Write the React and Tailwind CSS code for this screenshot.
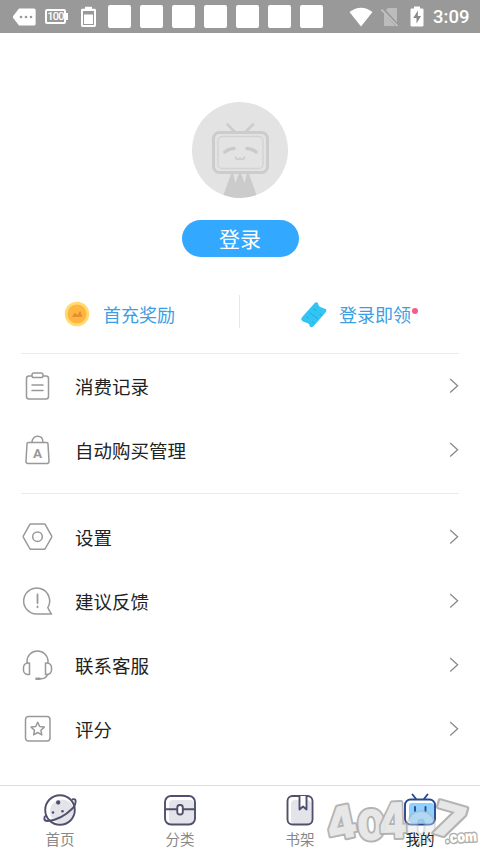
import React from 'react';

// Status bar icons
function StatusBar() {
  return (
    <header className="h-[33px] bg-[#999999] flex items-center text-white">
      <svg className="ml-3 shrink-0" width="24" height="18" viewBox="0 0 24 18">
        <path d="M7 0.5H22a1.6 1.6 0 0 1 1.6 1.6V15.9a1.6 1.6 0 0 1-1.6 1.6H7L1 9.8V8.2z" fill="#fff" />
        <circle cx="9" cy="9" r="1.3" fill="#999" />
        <circle cx="14" cy="9" r="1.3" fill="#999" />
        <circle cx="19" cy="9" r="1.3" fill="#999" />
      </svg>
      <div className="ml-[9px] w-[21px] h-[15px] border-2 border-white rounded-[2px] flex items-center justify-center">
        <span className="text-[11px] leading-none font-medium tracking-[-0.8px]">100</span>
      </div>
      <div className="w-[2px] h-[7px] bg-white"></div>
      <svg className="ml-[12px] shrink-0" width="17" height="22" viewBox="0 0 17 22">
        <path d="M5 0.8h7v2h2.6a1.4 1.4 0 0 1 1.4 1.4v15.4a1.4 1.4 0 0 1-1.4 1.4H2.4A1.4 1.4 0 0 1 1 19.6V4.2a1.4 1.4 0 0 1 1.4-1.4H5z" fill="#fff" />
        <rect x="3" y="5" width="11" height="14" fill="#999" />
        <rect x="4" y="8.5" width="9" height="9.5" fill="#fff" />
      </svg>
      <div className="ml-[11px] flex gap-[9px]">
        {[0, 1, 2, 3, 4, 5, 6].map((i) => (
          <div key={i} className="w-[23px] h-[23px] bg-white rounded-[2px]"></div>
        ))}
      </div>
      <svg className="ml-[26px] shrink-0" width="24" height="20" viewBox="0 0 24 20">
        <path d="M0.5 5Q12-3.5 23.5 5L12 19.5z" fill="#fff" />
      </svg>
      <svg className="ml-[8px] shrink-0" width="18" height="20" viewBox="0 0 18 20">
        <path d="M7 1h8a1 1 0 0 1 1 1v17H3V5z" fill="#bcbcbc" />
        <path d="M1 1.5L17 19" stroke="#999" strokeWidth="3.4" />
        <path d="M0.5 2.5L16.5 19" stroke="#c4c4c4" strokeWidth="1.6" />
      </svg>
      <svg className="ml-[11px] shrink-0" width="14" height="21" viewBox="0 0 14 21">
        <path d="M4 0.5h6v2h2.2a1.3 1.3 0 0 1 1.3 1.3v15.4a1.3 1.3 0 0 1-1.3 1.3H1.8a1.3 1.3 0 0 1-1.3-1.3V3.8a1.3 1.3 0 0 1 1.3-1.3H4z" fill="#fff" />
        <path d="M8 4.5L3.2 12h3.3v5.5L11 10H7.8z" fill="#8a8a8a" />
      </svg>
      <span className="ml-[9px] pt-[2px] text-[18.5px] leading-none font-medium">3:09</span>
    </header>
  );
}

function Avatar() {
  return (
    <svg width="96" height="96" viewBox="0 0 96 96">
      <defs>
        <clipPath id="avatar">
          <circle cx="48" cy="48" r="48" />
        </clipPath>
      </defs>
      <circle cx="48" cy="48" r="48" fill="#e3e3e3" />
      <g clipPath="url(#avatar)">
        <path d="M29 100l10-28h18l10 28z" fill="#cbcbcb" />
        <path d="M41 71l2.5 10L47 71zM49 71l3.5 10L55 71z" fill="#e3e3e3" />
      </g>
      <path d="M35.5 22.5l7 7M61 22.5l-7 7" stroke="#cdcdcd" strokeWidth="2.8" strokeLinecap="round" />
      <rect x="21.5" y="30.5" width="54" height="40" rx="6" fill="#e3e3e3" stroke="#cccccc" strokeWidth="3" />
      <rect x="26" y="34.5" width="45" height="32" rx="4" fill="none" stroke="#d3d3d3" strokeWidth="1.3" />
      <path d="M33 50q3-3 9-3.5M64 50q-3-3-9-3.5" fill="none" stroke="#cacaca" strokeWidth="3.5" strokeLinecap="round" />
      <path d="M43.5 55c0 3 4.5 3 4.5 0.5c0 2.5 4.5 2.5 4.5-0.5" fill="none" stroke="#cacaca" strokeWidth="1.5" strokeLinecap="round" />
    </svg>
  );
}

function CoinIcon() {
  return (
    <svg width="26" height="26" viewBox="0 0 26 26">
      <circle cx="13" cy="13" r="12.3" fill="#ffdb72" />
      <circle cx="13" cy="13" r="9.6" fill="#ffb640" />
      <path d="M8.5 15.5L11 12l2.5 2.5 2.5-4L18 15.5z" fill="#e98e35" stroke="#e98e35" strokeLinejoin="round" />
    </svg>
  );
}

function TicketIcon() {
  return (
    <svg width="28" height="28" viewBox="0 0 28 28">
      <path
        d="M14.5 2.2Q16.5 0.5 18 2.3Q18.5 5.8 21.5 6.5Q24.5 7.5 26.2 8.3Q26.8 10 25.5 11.5L13.5 25.2Q11.5 27.2 9.8 25.5Q9.5 22.3 6.5 21.8Q3 21 1.3 19Q0.8 17.5 2.2 16z"
        fill="#32c5f4"
      />
      <path d="M10 12l8 6M14 8l1.5 1.3M20 13l1.5 1.3M7 16l1 1M12.5 21l1 1" stroke="#22b0e8" strokeWidth="1.1" strokeLinecap="round" />
    </svg>
  );
}

const icons = {
  record: (
    <>
      <path d="M9.5 6H7a2.5 2.5 0 0 0-2.5 2.5v18A2.5 2.5 0 0 0 7 29h17a2.5 2.5 0 0 0 2.5-2.5v-18A2.5 2.5 0 0 0 24 6h-2.5" />
      <rect x="10" y="3" width="11" height="4.5" rx="1.8" />
      <path d="M10 15h11M10 20.5h11" />
    </>
  ),
  bag: (
    <>
      <path d="M6.5 8.5h18a1.5 1.5 0 0 1 1.5 1.5l1 17a2 2 0 0 1-2 2.5H6a2 2 0 0 1-2-2.5l1-17a1.5 1.5 0 0 1 1.5-1.5z" />
      <path d="M10 8.5C10 4.5 12.3 2.3 15.5 2.3S21 4.5 21 8.5" />
      <text x="15.5" y="24" textAnchor="middle" fontSize="13.5" fontWeight="bold" fill="#999" stroke="none">A</text>
    </>
  ),
  settings: (
    <>
      <path d="M8.9 3h13.2a1.5 1.5 0 0 1 1.2.7l6.3 11.2a1.5 1.5 0 0 1 0 1.4l-6.3 11.2a1.5 1.5 0 0 1-1.2.7H8.900a1.5 1.5 0 0 1-1.2-.7L1.4 16.3a1.5 1.5 0 0 1 0-1.4L7.7 3.7a1.5 1.5 0 0 1 1.2-.7z" />
      <circle cx="15.5" cy="15.7" r="4.8" />
    </>
  ),
  feedback: (
    <>
      <path d="M25.8 22.7A13 13 0 1 0 15 29h14.5q-.8-.6-3.7-6.3z" />
      <path d="M15.5 9.5v8.5M15.5 21.5v0.8" strokeWidth="1.8" />
    </>
  ),
  service: (
    <>
      <path d="M5 14V12.5a10.5 10.5 0 0 1 21 0V14" />
      <path d="M7.5 14v11.5H6A4.5 4.5 0 0 1 1.5 21v-2.5A4.5 4.5 0 0 1 6 14zM23.5 14v11.5H25a4.5 4.5 0 0 0 4.5-4.5v-2.5A4.5 4.5 0 0 0 25 14z" />
      <path d="M25.5 25.5q-1.5 4-6 4.2h-4" />
      <path d="M14.5 29.7h3" strokeWidth="2.6" />
    </>
  ),
  rate: (
    <>
      <rect x="3.5" y="3.5" width="24.5" height="24.5" rx="3" />
      <path d="M15.7 9.3l2 4.2 4.6.6-3.4 3.1.9 4.6-4.1-2.3-4.1 2.3.9-4.6-3.4-3.1 4.6-.6z" />
    </>
  ),
};

function MenuRow({ icon, label }) {
  return (
    <li className="h-16 flex items-center">
      <svg className="ml-px" width="32" height="32" viewBox="0 0 32 32" fill="none" stroke="#999" strokeWidth="1.5" strokeLinejoin="round" strokeLinecap="round">
        {icons[icon]}
      </svg>
      <span className="ml-[21px] pt-[5px] flex-1 text-[18.5px] leading-none text-[#222]">{label}</span>
      <svg width="10" height="16" viewBox="0 0 10 16" fill="none" stroke="#8a8a8a" strokeWidth="1.3">
        <path d="M1.2 1L8.6 7.8L1.2 14.6" />
      </svg>
    </li>
  );
}

const tabs = [
  {
    label: '首页',
    drawing: (
      <>
        <circle cx="20" cy="19.5" r="12" fill="#e2e4ea" stroke="none" />
        <circle cx="18" cy="18" r="14.8" />
        <path d="M30 7.5C35 5.5 34.5 11.5 31 16C24 23 14 28.5 5.5 29C1 29 2 24.5 4 23.5" />
        <circle cx="16.2" cy="10.5" r="1.5" fill="#50506e" strokeWidth="1.3" />
        <circle cx="11" cy="20.5" r="1.3" fill="#50506e" stroke="none" />
        <circle cx="20.5" cy="19.2" r="1.3" fill="#50506e" stroke="none" />
      </>
    ),
  },
  {
    label: '分类',
    drawing: (
      <>
        <rect x="7" y="8" width="25" height="24" rx="4" fill="#e2e4ea" stroke="none" />
        <rect x="3" y="4" width="30" height="28.5" rx="6" />
        <path d="M3 17.3h12M21 17.3h12" />
        <rect x="15.3" y="13" width="5.5" height="9.5" rx="2.5" fill="#fff" />
      </>
    ),
  },
  {
    label: '书架',
    drawing: (
      <>
        <rect x="9" y="8" width="20" height="24" rx="4" fill="#e2e4ea" stroke="none" />
        <rect x="5.5" y="4" width="25" height="28.5" rx="5" />
        <path d="M17.5 4v13.5l3.500-3 3.5 3V4" fill="#fff" />
      </>
    ),
  },
  {
    label: '我的',
    active: true,
    drawing: (
      <>
        <rect x="7" y="11" width="25" height="20" rx="3" fill="#8fd0ff" stroke="none" />
        <path d="M10.5 2.5l3.5 4.5M25.5 2.5L22 7" strokeLinecap="round" />
        <rect x="3" y="7.5" width="30" height="25" rx="5.5" />
        <path d="M13 15v4M23.5 15v4" strokeLinecap="round" />
      </>
    ),
  },
];

// cx, y: middle of the baseline, w: drawn width
const watermark = [
  { char: '4', cx: 21, y: 49, w: 30, size: 45, turn: -12 },
  { char: '0', cx: 51, y: 50, w: 28, size: 42, turn: -3 },
  { char: '4', cx: 73, y: 48, w: 28, size: 49, turn: -2 },
  { char: '0', cx: 101, y: 51, w: 28, size: 39, turn: 2, faint: true },
  { char: '7', cx: 129, y: 47, w: 31, size: 46, turn: 16 },
];

function Watermark() {
  return (
    <svg className="absolute right-0 bottom-0 overflow-visible" width="160" height="63" viewBox="0 0 160 63">
      <g fill="#e6e6e6" stroke="#b0b0b0" strokeLinejoin="round" fontFamily="Inter, Lato, sans-serif" fontWeight="900">
        {watermark.map((w, i) => (
          <text
            key={i}
            x={w.cx - w.w / 2}
            y={w.y}
            fontSize={w.size}
            strokeWidth="4"
            opacity={w.faint ? 0.4 : 0.95}
            textLength={w.w}
            lengthAdjust="spacingAndGlyphs"
            transform={`rotate(${w.turn} ${w.cx} ${w.y - 17})`}
            style={{ paintOrder: 'stroke' }}
          >
            {w.char}
          </text>
        ))}
        <text x="125" y="52" fontSize="15" strokeWidth="3" fill="#fff" textLength="32" lengthAdjust="spacingAndGlyphs" transform="rotate(-3 142 48)" style={{ paintOrder: 'stroke' }}>
          .com
        </text>
      </g>
    </svg>
  );
}

function TabBar() {
  return (
    <nav className="relative h-[68px] border-t border-[#dedede] bg-white">
      <div className="h-full grid grid-cols-4">
        {tabs.map((tab) => (
          <div key={tab.label} className="pt-[6px] flex flex-col items-center">
            <svg width="36" height="36" viewBox="0 0 36 36" fill="none" stroke={tab.active ? '#254a91' : '#50506e'} strokeWidth="1.9" strokeLinejoin="round">
              {tab.drawing}
            </svg>
            <span className={`mt-[6px] text-[14.5px] leading-none ${tab.active ? 'relative z-10 text-[#222]' : 'text-[#888]'}`}>{tab.label}</span>
          </div>
        ))}
      </div>
      <Watermark />
    </nav>
  );
}

function App() {
  return (
    <div className="w-[480px] h-[853px] overflow-hidden bg-white flex flex-col font-[Roboto,'Noto_Sans_CJK_SC',sans-serif]">
      <StatusBar />

      {/* Profile */}
      <section className="pt-[69px] flex flex-col items-center">
        <Avatar />
        <button className="mt-[22px] pt-[3px] w-[117px] h-[37px] rounded-full bg-[#33a8ff] text-white text-[21px] leading-none">登录</button>
      </section>

      {/* Rewards */}
      <section className="mt-[38px] h-[33px] flex items-center text-[18px] leading-none text-[#3b9fe3]">
        <div className="w-[239px] pl-[64px] pt-[5px] flex items-center gap-[13px]">
          <CoinIcon />
          <span className="pt-[3px]">首充奖励</span>
        </div>
        <div className="w-px h-full bg-[#e8e8e8]"></div>
        <div className="pl-[60px] pt-[6px] flex items-center">
          <TicketIcon />
          <span className="ml-[11px] pt-[2px]">登录即领</span>
          <i className="ml-px mb-[7px] w-[6px] h-[6px] rounded-full bg-[#f45d87]"></i>
        </div>
      </section>

      {/* Menu */}
      <main className="flex-1 mt-[25px] mx-[21px]">
        <ul className="border-t border-[#ebebeb] pb-[11px]">
          <MenuRow icon="record" label="消费记录" />
          <MenuRow icon="bag" label="自动购买管理" />
        </ul>
        <ul className="border-t border-[#ebebeb] pt-[11px]">
          <MenuRow icon="settings" label="设置" />
          <MenuRow icon="feedback" label="建议反馈" />
          <MenuRow icon="service" label="联系客服" />
          <MenuRow icon="rate" label="评分" />
        </ul>
      </main>

      <TabBar />
    </div>
  );
}

export default App;
